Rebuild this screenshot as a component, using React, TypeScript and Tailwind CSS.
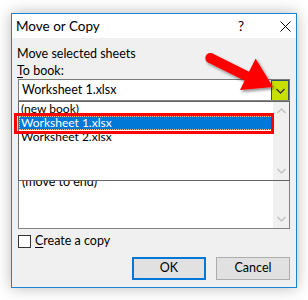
import React from 'react';

const font = { fontFamily: 'Lato, "Noto Sans", sans-serif' };

function Chevron({ up = false, color = '#c2c2c2' }: { up?: boolean; color?: string }) {
  return (
    <svg width="9" height="6" viewBox="0 0 9 6" className="block">
      <path d={up ? 'M0.5 5 L4.5 1 L8.5 5' : 'M0.5 1 L4.5 5 L8.5 1'} fill="none" stroke={color} strokeWidth="1.4" />
    </svg>
  );
}

function Arrow() {
  // red annotation arrow pointing at the dropdown button
  return (
    <svg className="absolute left-0 top-0 pointer-events-none" width="308" height="300" viewBox="0 0 308 300">
      <defs>
        <filter id="sh" x="-20%" y="-20%" width="140%" height="140%">
          <feDropShadow dx="1.5" dy="2" stdDeviation="1.6" floodColor="#000" floodOpacity="0.45" />
        </filter>
      </defs>
      <g filter="url(#sh)" fill="#ff0000">
        <path d="M212.5 53.6 L250.2 72.3 L245.8 81.3 L208.1 62.6 Z" />
        <circle cx="210.3" cy="58.1" r="5" />
        <path d="M255.6 58.6 L273 87 L240 90 Z" />
      </g>
    </svg>
  );
}

export default function App() {
  return (
    <div className="relative w-[308px] h-[300px] bg-white pt-[13px] pl-[11px] text-[12.5px] text-black" style={font}>
      <div className="w-[286px] h-[275px] border border-[#1883d7] bg-[#f0f0f0] flex flex-col shadow-[0_0_14px_rgba(0,0,0,0.28)]">
        {/* title bar */}
        <div className="h-[24px] bg-white flex items-center pl-[4px] shrink-0">
          <span className="flex-1 text-[13.5px] leading-none pt-[2px]">Move or Copy</span>
          <span className="text-[13.5px] leading-none pt-[2px] mr-[36px]">?</span>
          <svg width="11" height="11" viewBox="0 0 11 11" className="mr-[5px] mt-[1px]">
            <path d="M0.5 0.5 L10.5 10.5 M10.5 0.5 L0.5 10.5" stroke="#000" strokeWidth="1" />
          </svg>
        </div>

        {/* body */}
        <div className="flex flex-col px-[6px] pt-[8px]">
          <div className="leading-[16px] -ml-px">Move selected sheets</div>
          <div className="leading-[15px] -ml-px mt-px">
            <span className="underline underline-offset-2">T</span>o book:
          </div>

          {/* combobox */}
          <div className="mt-[1px] h-[23px] border border-[#7a7a7a] bg-white flex items-center">
            <span className="flex-1 pl-[3px]">Worksheet 1.xlsx</span>
            <div className="w-[18px] h-[21px] border border-[#2e5166] bg-[#c8e000] flex items-center justify-center">
              <Chevron color="#3a3a3a" />
            </div>
          </div>

          {/* list area: underlying listbox with dropdown overlaid */}
          <div className="relative h-[127px]">
            <div className="absolute inset-x-0 top-[-2px] bottom-0 border border-[#828282] bg-white flex">
              <div className="flex-1 flex flex-col justify-start pt-[74px] pl-[3px]">
                <span className="leading-[14px]">(move to end)</span>
              </div>
              <div className="w-[16px] bg-[#f0f0f0] flex flex-col justify-end items-center pb-[6px]">
                <Chevron />
              </div>
            </div>

            {/* dropdown list */}
            <div className="absolute inset-x-0 top-[-1px] h-[80px] border border-[#646464] bg-white flex">
              <div className="flex-1 flex flex-col text-[12px]">
                <div className="h-[14px] leading-[14px] pl-[2px]">(new book)</div>
                <div className="h-[14px] leading-[14px] pl-[2px] bg-[#0078d7] text-white outline outline-1 outline-dotted outline-[#f5c084] -outline-offset-1">
                  Worksheet 1.xlsx
                </div>
                <div className="h-[14px] leading-[14px] pl-[2px]">Worksheet 2.xlsx</div>
              </div>
              <div className="w-[16px] bg-[#f0f0f0] flex flex-col justify-between items-center py-[6px]">
                <Chevron up />
                <Chevron />
              </div>
            </div>

            {/* red highlight box */}
            <div className="absolute left-[-4px] top-[11px] w-[260px] h-[21px] border-[3px] border-[#ff0000]" />
          </div>

          {/* checkbox */}
          <div className="flex items-center mt-[5px] h-[14px]">
            <div className="w-[13px] h-[13px] border border-[#333] bg-white" />
            <span className="ml-[4px] leading-none">
              <span className="underline underline-offset-2">C</span>reate a copy
            </span>
          </div>

          {/* buttons */}
          <div className="flex justify-end gap-[10px] mt-[9px]">
            <button className="w-[74px] h-[23px] border-2 border-[#0078d7] bg-[#e1e1e1] leading-none">OK</button>
            <button className="w-[74px] h-[23px] border border-[#adadad] bg-[#e1e1e1] leading-none">Cancel</button>
          </div>
        </div>
      </div>
      <Arrow />
    </div>
  );
}
